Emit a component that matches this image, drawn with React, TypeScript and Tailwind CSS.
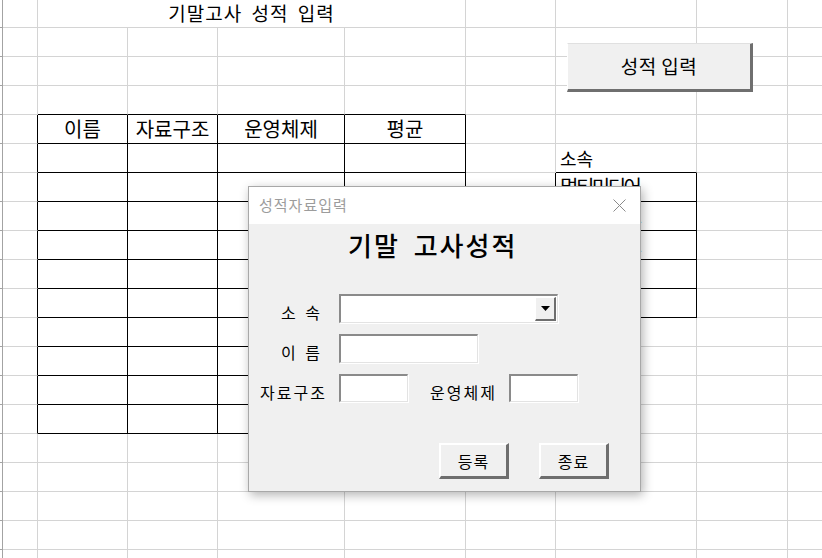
import React from "react";

const COLS = [
  "w-[3px]",
  "w-[35px]",
  "w-[90px]",
  "w-[90px]",
  "w-[127px]",
  "w-[121px]",
  "w-[90px]",
  "w-[141px]",
  "w-[91px]",
  "w-[60px]",
];

const HEAD: Record<number, string> = { 2: "이름", 3: "자료구조", 4: "운영체제", 5: "평균" };
const LIST: Record<number, string> = { 6: "멀티미디어", 7: "컴퓨터정보", 8: "게임콘텐츠", 9: "소프트웨어" };

function SheetRow({ r }: { r: number }) {
  const h = r === 0 ? "h-[28px]" : "h-[29px]";
  if (r === 0) {
    return (
      <div className={`flex ${h}`}>
        <div className="w-[3px] shrink-0 border-r border-b border-[#a3a3a3]" />
        <div className="w-[35px] shrink-0 border-r border-b border-[#d4d4d4]" />
        <div className="w-[428px] shrink-0 border-r border-b border-[#d4d4d4] flex items-center justify-center text-[19px] text-black tracking-[1px] [word-spacing:4px]">
          기말고사 성적 입력
        </div>
        <div className="w-[90px] shrink-0 border-r border-b border-[#d4d4d4]" />
        <div className="w-[141px] shrink-0 border-r border-b border-[#d4d4d4]" />
        <div className="w-[91px] shrink-0 border-r border-b border-[#d4d4d4]" />
        <div className="w-[60px] shrink-0 border-r border-b border-[#d4d4d4]" />
      </div>
    );
  }
  return (
    <div className={`flex ${h}`}>
      {COLS.map((w, i) => {
        if (i === 0) {
          return <div key={i} className={`${w} shrink-0 border-r border-b border-[#a3a3a3]`} />;
        }
        const rightBlack =
          (r >= 4 && r <= 14 && i >= 1 && i <= 5) || (r >= 6 && r <= 10 && (i === 6 || i === 7));
        const bottomBlack = (r >= 3 && r <= 14 && i >= 2 && i <= 5) || (r >= 5 && r <= 10 && i === 7);
        const rc = rightBlack ? "border-r-black" : "border-r-[#d4d4d4]";
        const bc = bottomBlack ? "border-b-black" : "border-b-[#d4d4d4]";
        let content: React.ReactNode = null;
        let align = "justify-start";
        if (r === 4 && HEAD[i]) {
          content = <span className="text-[20px] leading-none whitespace-nowrap">{HEAD[i]}</span>;
          align = "justify-center";
        } else if (r === 5 && i === 7) {
          content = <span className="pl-[4px] text-[18px] leading-none">소속</span>;
        } else if (i === 7 && LIST[r]) {
          content = (
            <span className="pl-[4px] text-[20px] tracking-[-2.5px] leading-none whitespace-nowrap">{LIST[r]}</span>
          );
        }
        return (
          <div key={i} className={`${w} shrink-0 border-r border-b ${rc} ${bc} flex items-center ${align} text-black`}>
            {content}
          </div>
        );
      })}
    </div>
  );
}

function WinButton({ label, className }: { label: string; className: string }) {
  return (
    <div
      className={`flex items-center justify-center bg-[#f0f0f0] border-t-2 border-l-2 border-t-white border-l-white border-b-[3px] border-r-[3px] border-b-[#6e6e6e] border-r-[#6e6e6e] text-[16px] tracking-[1px] text-black ${className}`}
    >
      {label}
    </div>
  );
}

function TextBox({ className }: { className: string }) {
  return (
    <div
      className={`bg-white border-t-2 border-l-2 border-t-[#8a8a8a] border-l-[#8a8a8a] border-b border-r border-b-[#e3e3e3] border-r-[#e3e3e3] shadow-[1px_1px_0_#ffffff] ${className}`}
    />
  );
}

export default function App() {
  const rows = Array.from({ length: 20 }, (_, i) => i);
  return (
    <div className="relative w-[822px] h-[558px] overflow-hidden bg-white font-['Noto_Sans_CJK_KR','Noto_Sans',sans-serif]">
      <div className="flex flex-col">
        {rows.map((r) => (
          <SheetRow key={r} r={r} />
        ))}
      </div>

      {/* Sheet button */}
      <div className="absolute left-[567px] top-[43px] w-[186px] h-[49px] flex items-center justify-center bg-[#f0f0f0] border-t border-l border-t-[#e0e0e0] border-l-white border-b-[3px] border-r-[3px] border-b-[#6f6f6f] border-r-[#6f6f6f] text-[19px] tracking-[0.5px] text-black">
        성적 입력
      </div>

      {/* Dialog */}
      <div className="absolute left-[248px] top-[186px] w-[393px] h-[306px] border border-[#a8a8a8] bg-[#f0f0f0] shadow-[2px_3px_10px_rgba(0,0,0,0.3)] flex flex-col">
        <div className="h-[37px] bg-white flex items-center justify-between pl-[10px] pr-[14px]">
          <span className="text-[15px] tracking-[1px] text-[#9c9c9c]">성적자료입력</span>
          <svg width="13" height="13" viewBox="0 0 13 13">
            <path d="M0.5 0.5 L12.5 12.5 M12.5 0.5 L0.5 12.5" stroke="#8a8a8a" strokeWidth="1" fill="none" />
          </svg>
        </div>
        <div className="flex flex-col">
          <div className="pt-[4px] h-[38px] pl-[99px] text-[26px] leading-[34px] font-medium tracking-[2px] text-black [word-spacing:6px]">
            기말 고사성적
          </div>
          {/* 소속 */}
          <div className="mt-[32px] flex items-center h-[29px]">
            <div className="w-[90px] pl-[32px] mt-[7px] text-[16px] tracking-[1px] text-black [word-spacing:4px]">소 속</div>
            <div className="w-[219px] h-[29px] bg-white border-t-2 border-l-2 border-t-[#8a8a8a] border-l-[#8a8a8a] border-b border-r border-b-[#e3e3e3] border-r-[#e3e3e3] shadow-[1px_1px_0_#ffffff] flex justify-end p-[1px]">
              <div className="w-[21px] h-full bg-[#f0f0f0] border-t border-l border-t-white border-l-white border-b-2 border-r-2 border-b-[#6e6e6e] border-r-[#6e6e6e] flex items-center justify-center">
                <svg width="9" height="5" viewBox="0 0 9 5">
                  <polygon points="0,0 9,0 4.5,5" fill="#000" />
                </svg>
              </div>
            </div>
          </div>
          {/* 이름 */}
          <div className="mt-[11px] flex items-center h-[29px]">
            <div className="w-[90px] pl-[32px] mt-[7px] text-[16px] tracking-[1px] text-black [word-spacing:4px]">이 름</div>
            <TextBox className="w-[139px] h-[29px]" />
          </div>
          {/* 자료구조 / 운영체제 */}
          <div className="mt-[11px] flex items-center h-[28px]">
            <div className="w-[90px] pl-[11px] mt-[7px] text-[16px] tracking-[2px] text-black whitespace-nowrap">자료구조</div>
            <TextBox className="w-[69px] h-[28px]" />
            <div className="ml-[22px] w-[79px] mt-[7px] text-[16px] tracking-[2px] text-black whitespace-nowrap">운영체제</div>
            <TextBox className="w-[69px] h-[28px]" />
          </div>
          {/* buttons */}
          <div className="mt-[41px] flex pl-[190px] gap-[30px]">
            <WinButton label="등록" className="w-[70px] h-[36px]" />
            <WinButton label="종료" className="w-[70px] h-[36px]" />
          </div>
        </div>
      </div>
    </div>
  );
}
